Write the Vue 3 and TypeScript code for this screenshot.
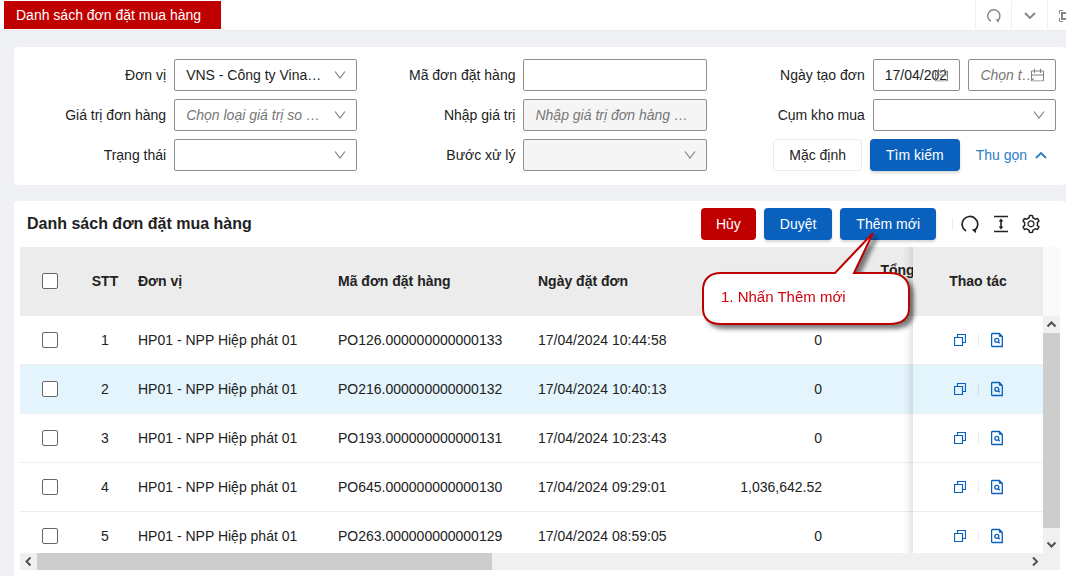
<script setup lang="ts">
import { ref } from 'vue'

interface OrderRow {
  stt: number
  unit: string
  code: string
  date: string
  value: string
}

const rows: OrderRow[] = [
  { stt: 1, unit: 'HP01 - NPP Hiệp phát 01', code: 'PO126.000000000000133', date: '17/04/2024 10:44:58', value: '0' },
  { stt: 2, unit: 'HP01 - NPP Hiệp phát 01', code: 'PO216.000000000000132', date: '17/04/2024 10:40:13', value: '0' },
  { stt: 3, unit: 'HP01 - NPP Hiệp phát 01', code: 'PO193.000000000000131', date: '17/04/2024 10:23:43', value: '0' },
  { stt: 4, unit: 'HP01 - NPP Hiệp phát 01', code: 'PO645.000000000000130', date: '17/04/2024 09:29:01', value: '1,036,642.52' },
  { stt: 5, unit: 'HP01 - NPP Hiệp phát 01', code: 'PO263.000000000000129', date: '17/04/2024 08:59:05', value: '0' },
]

const activeRow = ref(2)
const fromDate = ref('17/04/2024')
</script>

<template>
  <div class="page">
    <header class="topbar">
      <a class="tab" href="#">Danh sách đơn đặt mua hàng</a>
      <div class="tools">
        <button type="button" class="tool" aria-label="Tải lại">
          <svg width="16" height="16" viewBox="0 0 20 20" fill="none" stroke="currentColor" stroke-width="1.8">
            <path d="M6 16.4A7.6 7.6 0 1 1 15 15.4" />
            <path d="M11.8 14.4l4.6-.4-.8 4.4z" fill="currentColor" stroke="none" />
          </svg>
        </button>
        <button type="button" class="tool" aria-label="Mở rộng">
          <svg width="12" height="8" viewBox="0 0 12 8" fill="none" stroke="currentColor" stroke-width="1.9">
            <path d="M1 1l5 5 5-5" />
          </svg>
        </button>
        <button type="button" class="tool last" aria-label="Toàn màn hình">
          <svg width="14" height="12" viewBox="0 0 14 12" fill="none" stroke="currentColor">
            <path d="M4 .5H.5v3M.5 8v3.5H4M10 .5h3.5v3M13.5 8v3.5H10" />
            <rect x="3" y="3" width="8" height="6" stroke-width="2" />
          </svg>
        </button>
      </div>
    </header>

    <form class="filters" @submit.prevent>
      <div class="field">
        <label for="unit">Đơn vị</label>
        <div class="control">
          <select id="unit"><option>VNS - Công ty Vina…</option></select>
          <svg class="chev" viewBox="0 0 12 8"><path d="M1 .5l5 6.5 5-6.5" /></svg>
        </div>
      </div>
      <div class="field">
        <label for="code">Mã đơn đặt hàng</label>
        <div class="control"><input id="code" type="text" /></div>
      </div>
      <div class="field">
        <label for="from">Ngày tạo đơn</label>
        <div class="dates">
          <div class="control">
            <input id="from" v-model="fromDate" class="date" type="text" />
            <svg class="cal" viewBox="0 0 13 13"><path d="M.5 2.5h12v10H.5zM.5 6.5h12M3.500 0v4.5M9.5 0v4.5" /></svg>
          </div>
          <div class="control">
            <input class="date" type="text" placeholder="Chọn t…" aria-label="Đến ngày" />
            <svg class="cal" viewBox="0 0 13 13"><path d="M.5 2.5h12v10H.5zM.5 6.5h12M3.5 0v4.5M9.5 0v4.5" /></svg>
          </div>
        </div>
      </div>
      <div class="field">
        <label for="cmp">Giá trị đơn hàng</label>
        <div class="control">
          <select id="cmp" class="hint"><option>Chọn loại giá trị so …</option></select>
          <svg class="chev" viewBox="0 0 12 8"><path d="M1 .5l5 6.5 5-6.5" /></svg>
        </div>
      </div>
      <div class="field">
        <label for="amount">Nhập giá trị</label>
        <div class="control"><input id="amount" type="text" placeholder="Nhập giá trị đơn hàng …" disabled /></div>
      </div>
      <div class="field">
        <label for="cluster">Cụm kho mua</label>
        <div class="control">
          <select id="cluster"><option></option></select>
          <svg class="chev" viewBox="0 0 12 8"><path d="M1 .5l5 6.5 5-6.5" /></svg>
        </div>
      </div>
      <div class="field">
        <label for="status">Trạng thái</label>
        <div class="control">
          <select id="status"><option></option></select>
          <svg class="chev" viewBox="0 0 12 8"><path d="M1 .5l5 6.5 5-6.5" /></svg>
        </div>
      </div>
      <div class="field">
        <label for="step">Bước xử lý</label>
        <div class="control">
          <select id="step" disabled><option></option></select>
          <svg class="chev" viewBox="0 0 12 8"><path d="M1 .5l5 6.5 5-6.5" /></svg>
        </div>
      </div>
      <div class="form-actions">
        <button type="reset" class="btn plain">Mặc định</button>
        <button type="submit" class="btn primary">Tìm kiếm</button>
        <button type="button" class="collapse">
          Thu gọn
          <svg width="12" height="8" viewBox="0 0 12 8" fill="none" stroke="currentColor" stroke-width="1.8">
            <path d="M1 7l5-5 5 5" />
          </svg>
        </button>
      </div>
    </form>

    <section class="list">
      <div class="list-head">
        <h1>Danh sách đơn đặt mua hàng</h1>
        <div class="list-tools">
          <button type="button" class="btn danger">Hủy</button>
          <button type="button" class="btn primary">Duyệt</button>
          <button type="button" class="btn primary">Thêm mới</button>
          <span class="sep"></span>
          <button type="button" class="icon-btn" aria-label="Tải lại">
            <svg width="20" height="20" viewBox="0 0 20 20" fill="none" stroke="currentColor" stroke-width="1.7">
              <path d="M5 17A7.8 7.8 0 1 1 14 16.2" />
              <path d="M10.800 15.400l4.600-.8-.8 4.600z" fill="currentColor" stroke="none" />
            </svg>
          </button>
          <button type="button" class="icon-btn" aria-label="Mật độ">
            <svg width="20" height="20" viewBox="0 0 20 20" fill="none" stroke="currentColor" stroke-width="1.6">
              <path d="M3 2.500h14M3 17.500h14M10 6v8" />
              <path d="M7.600 7.600L10 4.600l2.400 3zM7.600 12.400l2.400 3 2.400-3z" fill="currentColor" stroke="none" />
            </svg>
          </button>
          <button type="button" class="icon-btn" aria-label="Cài đặt">
            <svg width="20" height="20" viewBox="24 24 976 976" fill="currentColor">
              <path d="M924.8 625.7l-65.5-56c3.1-19 4.7-38.4 4.7-57.8s-1.6-38.8-4.7-57.8l65.5-56a32.03 32.03 0 0 0 9.3-35.2l-.9-2.6a443.74 443.74 0 0 0-79.7-137.9l-1.8-2.1a32.12 32.12 0 0 0-35.1-9.5l-81.3 28.9c-30-24.6-63.5-44-99.7-57.6l-15.7-85a32.05 32.05 0 0 0-25.8-25.7l-2.7-.5c-52.1-9.4-106.9-9.4-159 0l-2.7.5a32.05 32.05 0 0 0-25.8 25.7l-15.8 85.4a351.86 351.86 0 0 0-99 57.4l-81.9-29.1a32 32 0 0 0-35.1 9.5l-1.8 2.1a446.02 446.02 0 0 0-79.7 137.9l-.9 2.6c-4.5 12.5-.8 26.5 9.3 35.2l66.3 56.6c-3.1 18.8-4.6 38-4.6 57.1 0 19.2 1.5 38.4 4.6 57.1L99 625.5a32.03 32.03 0 0 0-9.3 35.2l.9 2.6c18.1 50.4 44.9 96.9 79.7 137.9l1.8 2.1a32.12 32.12 0 0 0 35.1 9.5l81.9-29.1c29.8 24.5 63.1 43.9 99 57.4l15.8 85.4a32.05 32.05 0 0 0 25.8 25.7l2.7.5a449.4 449.4 0 0 0 159 0l2.7-.5a32.05 32.05 0 0 0 25.8-25.7l15.7-85a350 350 0 0 0 99.7-57.6l81.3 28.9a32 32 0 0 0 35.1-9.5l1.8-2.1c34.8-41.1 61.6-87.5 79.7-137.9l.9-2.6c4.5-12.3.8-26.3-9.3-35zM788.3 465.9c2.5 15.1 3.8 30.6 3.8 46.1s-1.3 31-3.8 46.1l-6.6 40.1 74.7 63.9a370.03 370.03 0 0 1-42.6 73.6L721 702.8l-31.4 25.8c-23.9 19.6-50.5 35-79.3 45.8l-38.1 14.3-17.9 97a377.5 377.5 0 0 1-85 0l-17.9-97.2-37.8-14.5c-28.5-10.8-55-26.2-78.7-45.7l-31.4-25.9-93.4 33.2c-17-22.9-31.2-47.6-42.6-73.6l75.5-64.5-6.5-40c-2.4-14.9-3.7-30.3-3.7-45.5 0-15.3 1.2-30.6 3.7-45.5l6.5-40-75.5-64.5c11.3-26.1 25.6-50.7 42.6-73.6l93.4 33.2 31.4-25.9c23.7-19.5 50.2-34.9 78.7-45.7l37.9-14.3 17.9-97.2c28.1-3.2 56.8-3.2 85 0l17.9 97 38.1 14.3c28.7 10.8 55.4 26.2 79.3 45.8l31.4 25.8 92.8-32.9c17 22.9 31.2 47.6 42.6 73.6L781.8 426l6.5 39.9zM512 326c-97.2 0-176 78.8-176 176s78.8 176 176 176 176-78.8 176-176-78.8-176-176-176zm79.2 255.2A111.6 111.6 0 0 1 512 614c-29.9 0-58-11.7-79.2-32.8A111.6 111.6 0 0 1 400 502c0-29.9 11.7-58 32.8-79.2C454 401.6 482.1 390 512 390c29.9 0 58 11.6 79.2 32.8A111.6 111.6 0 0 1 624 502c0 29.9-11.7 58-32.8 79.2z" />
            </svg>
          </button>
        </div>
      </div>

      <div class="grid">
        <div class="viewport">
          <table>
            <colgroup>
              <col class="c-check" />
              <col class="c-stt" />
              <col class="c-wide" />
              <col class="c-wide" />
              <col class="c-wide" />
              <col class="c-value" />
              <col class="c-total" />
              <col class="c-action" />
            </colgroup>
            <thead>
              <tr>
                <th class="center"><input type="checkbox" aria-label="Chọn tất cả" /></th>
                <th class="center">STT</th>
                <th>Đơn vị</th>
                <th>Mã đơn đặt hàng</th>
                <th>Ngày đặt đơn</th>
                <th></th>
                <th class="center">Tổng<br />&nbsp;</th>
                <th class="center fixed">Thao tác</th>
              </tr>
            </thead>
            <tbody>
              <tr v-for="row in rows" :key="row.stt" :class="{ active: row.stt === activeRow }" @mouseenter="activeRow = row.stt">
                <td class="center"><input type="checkbox" :aria-label="'Chọn dòng ' + row.stt" /></td>
                <td class="center">{{ row.stt }}</td>
                <td>{{ row.unit }}</td>
                <td>{{ row.code }}</td>
                <td>{{ row.date }}</td>
                <td class="right">{{ row.value }}</td>
                <td></td>
                <td class="fixed">
                  <div class="row-actions">
                    <button type="button" aria-label="Sao chép">
                      <svg width="12" height="12" viewBox="0 0 12 12" fill="none" stroke="currentColor" stroke-width="1.2">
                        <path d="M.5 3.5h8v8h-8zM3.5 3.5v-3h8v8h-3" />
                      </svg>
                    </button>
                    <span class="sep"></span>
                    <button type="button" aria-label="Xem chi tiết">
                      <svg width="12" height="16" viewBox="0 0 12 16" fill="none" stroke="currentColor" stroke-width="1.3">
                        <path d="M1.400 1.500h7l2.900 2.900v10.100H1.400a.7.7 0 0 1-.8-.7V2.200a.7.7 0 0 1 .8-.7z" />
                        <path d="M8.200 1.500v3h3z" fill="currentColor" stroke-width=".6" />
                        <circle cx="5.800" cy="8.300" r="2" />
                        <path d="M7.300 9.800l1.400 1.400" />
                      </svg>
                    </button>
                  </div>
                </td>
              </tr>
            </tbody>
          </table>
        </div>
        <div class="side">
          <div class="side-head"></div>
          <div class="vbar">
            <svg class="arrow" viewBox="0 0 17 17"><path d="M4.500 10.500l4-4 4 4" /></svg>
            <div class="vtrack"><div class="vthumb"></div></div>
            <svg class="arrow" viewBox="0 0 17 17"><path d="M4.500 6.500l4 4 4-4" /></svg>
          </div>
        </div>
        <div class="hbar">
          <svg class="arrow" viewBox="0 0 17 17"><path d="M10.500 4.500l-4 4 4 4" /></svg>
          <div class="htrack"><div class="hthumb"></div></div>
          <svg class="arrow" viewBox="0 0 17 17"><path d="M7 4.500l4 4-4 4" /></svg>
        </div>
        <div class="corner"></div>
      </div>

      <div class="callout">
        <svg width="220" height="104" viewBox="0 0 220 104">
          <path d="M20 42H134L172 2L153 42H188C201 42 208 49 208 59V77C208 88 201 93 188 93H20C8 93 2 88 2 77V59C2 49 8 42 20 42z" />
        </svg>
        <p>1. Nhấn Thêm mới</p>
      </div>
    </section>
  </div>
</template>

<style>
body {
  background: #f0f1f5;
}
</style>

<style scoped>
* {
  box-sizing: border-box;
}
.page {
  display: flex;
  flex-direction: column;
  height: 100vh;
  min-height: 480px;
  overflow: hidden;
  background: #f0f1f5;
  color: #222;
  font-family: "Liberation Sans", Arial, sans-serif;
  font-size: 14px;
  line-height: 22px;
}
button,
input,
select {
  font: inherit;
  color: inherit;
  margin: 0;
}
button {
  cursor: pointer;
}
.topbar {
  flex: none;
  display: flex;
  justify-content: space-between;
  padding: 1px 0 1px 4px;
  background: #fff;
  border-bottom: 1px solid #ebebee;
}
.tab {
  padding: 3px 20px 3px 12px;
  background: #c00000;
  color: #fff;
  text-decoration: none;
}
.tools {
  display: flex;
}
.tool {
  display: flex;
  align-items: center;
  justify-content: center;
  width: 36px;
  padding: 2px 0 0;
  border: 0;
  border-left: 1px solid #eee;
  background: none;
  color: #858585;
}
.tool.last {
  justify-content: flex-start;
  width: 19px;
  padding-left: 11px;
  overflow: hidden;
}
.tool svg {
  flex: none;
}
.filters {
  flex: none;
  display: grid;
  grid-template-columns: repeat(3, minmax(0, 1fr));
  gap: 8px;
  margin: 16px 0 0 14px;
  padding: 12px 10px 14px 2px;
  background: #fff;
  border-radius: 4px;
}
.field {
  display: grid;
  grid-template-columns: minmax(0, 150fr) minmax(0, 183fr);
  gap: 8px;
  align-items: center;
}
.field label {
  text-align: right;
  white-space: nowrap;
}
.control {
  position: relative;
  flex: 1;
  min-width: 0;
}
.control input,
.control select {
  display: block;
  width: 100%;
  height: 32px;
  padding: 0 12px 0 11px;
  border: 1px solid #8f8f8f;
  border-radius: 2px;
  background: #fff;
  appearance: none;
  outline: none;
  opacity: 1;
}
.control select {
  padding-right: 28px;
}
.control input:disabled,
.control select:disabled {
  background: #f5f5f5;
}
.control input::placeholder,
.control .hint {
  color: #777;
  font-style: italic;
  opacity: 1;
}
.control .date {
  padding-right: 12px;
}
.chev,
.cal {
  position: absolute;
  top: 50%;
  transform: translateY(-50%);
  fill: none;
  stroke: #808080;
  pointer-events: none;
}
.chev {
  right: 11px;
  width: 12px;
  height: 8px;
  stroke-width: 1.2;
}
.cal {
  right: 12px;
  width: 13px;
  height: 13px;
}
.dates {
  display: flex;
  gap: 8px;
}
.form-actions {
  display: flex;
  justify-content: flex-end;
  gap: 8px;
}
.btn {
  height: 32px;
  padding: 0 15px;
  border: 1px solid transparent;
  border-radius: 4px;
  white-space: nowrap;
}
.plain {
  background: #fff;
  border-color: #ececec;
}
.primary {
  background: #0960bd;
  color: #fff;
  box-shadow: 0 2px 3px rgba(0, 0, 0, 0.16);
}
.danger {
  padding: 0 14px;
  background: #c00000;
  color: #fff;
}
.collapse {
  display: flex;
  align-items: center;
  gap: 8px;
  padding: 0 9px 0 8px;
  border: 0;
  background: none;
  color: #2a7dc9;
  white-space: nowrap;
}
.list {
  position: relative;
  flex: 1;
  min-height: 0;
  display: flex;
  flex-direction: column;
  margin: 16px 0 0 14px;
  padding: 0 6px 6px;
  background: #fff;
  border-radius: 4px 4px 0 0;
}
.list-head {
  flex: none;
  display: flex;
  justify-content: space-between;
  align-items: center;
  padding: 7px 19px 7px 7px;
}
h1 {
  margin: 0;
  font-size: 16px;
  line-height: 24px;
}
.list-tools {
  display: flex;
  align-items: center;
  gap: 8px;
}
.sep {
  flex: none;
  width: 1px;
  height: 12px;
  background: rgba(0, 0, 0, 0.08);
}
.list-tools .sep {
  margin-left: 8px;
}
.icon-btn {
  display: flex;
  padding: 0;
  border: 0;
  background: none;
}
.icon-btn + .icon-btn {
  margin-left: 2px;
}
.grid {
  flex: 1;
  min-height: 0;
  display: grid;
  grid-template-columns: minmax(0, 1fr) 17px;
  grid-template-rows: minmax(0, 1fr) 17px;
}
.viewport {
  overflow: hidden;
  border-top-left-radius: 2px;
}
table {
  width: 100%;
  min-width: 1075px;
  table-layout: fixed;
  border-collapse: separate;
  border-spacing: 0;
}
.c-check {
  width: 60px;
}
.c-stt {
  width: 50px;
}
.c-wide {
  width: 200px;
}
.c-value {
  width: 100px;
}
.c-total {
  width: 135px;
}
.c-action {
  width: 130px;
}
th,
td {
  padding: 0 8px;
  text-align: left;
  white-space: nowrap;
}
th {
  height: 69px;
  background: #ececec;
  border-bottom: 1px solid #ececec;
}
td {
  height: 49px;
  background: #fff;
  border-bottom: 1px solid #eee;
}
.active td {
  background: #e3f4fc;
}
.center {
  text-align: center;
}
.right {
  text-align: right;
}
.fixed {
  position: sticky;
  right: 0;
}
.fixed::before {
  content: "";
  position: absolute;
  top: 0;
  bottom: -1px;
  right: 100%;
  width: 10px;
  background: linear-gradient(to left, rgba(0, 0, 0, 0.1), rgba(0, 0, 0, 0.03) 50%, rgba(0, 0, 0, 0));
}
td input,
th input {
  display: block;
  width: 16px;
  height: 16px;
  margin: 0 auto;
  appearance: none;
  background: #fff;
  border: 1px solid #666;
  border-radius: 2px;
}
.row-actions {
  display: flex;
  justify-content: center;
  align-items: center;
  gap: 12px;
}
.row-actions button {
  display: flex;
  padding: 0;
  border: 0;
  background: none;
  color: #0960bd;
}
.side {
  display: flex;
  flex-direction: column;
}
.side-head {
  flex: none;
  height: 69px;
  background: #fafafa;
}
.vbar {
  flex: 1;
  min-height: 0;
  display: flex;
  flex-direction: column;
  background: #f0f0f0;
}
.hbar {
  display: flex;
  background: #f0f0f0;
}
.vtrack,
.htrack {
  flex: 1;
  min-height: 0;
  min-width: 0;
}
.vthumb {
  height: 96%;
  background: #cdcdcd;
}
.hthumb {
  width: 46%;
  height: 17px;
  background: #cdcdcd;
}
.arrow {
  flex: none;
  width: 17px;
  height: 17px;
  fill: none;
  stroke: #505050;
  stroke-width: 2;
}
.corner {
  background: #f0f0f0;
}
.callout {
  position: absolute;
  top: 30px;
  right: 145px;
  width: 220px;
  height: 104px;
  pointer-events: none;
}
.callout svg {
  display: block;
  fill: #fff;
  stroke: #bd0000;
  stroke-width: 2;
  filter: drop-shadow(4px 4px 2px rgba(0, 0, 0, 0.5));
}
.callout p {
  position: absolute;
  left: 20px;
  top: 55px;
  margin: 0;
  color: #d0000d;
  font-size: 15px;
}
</style>
